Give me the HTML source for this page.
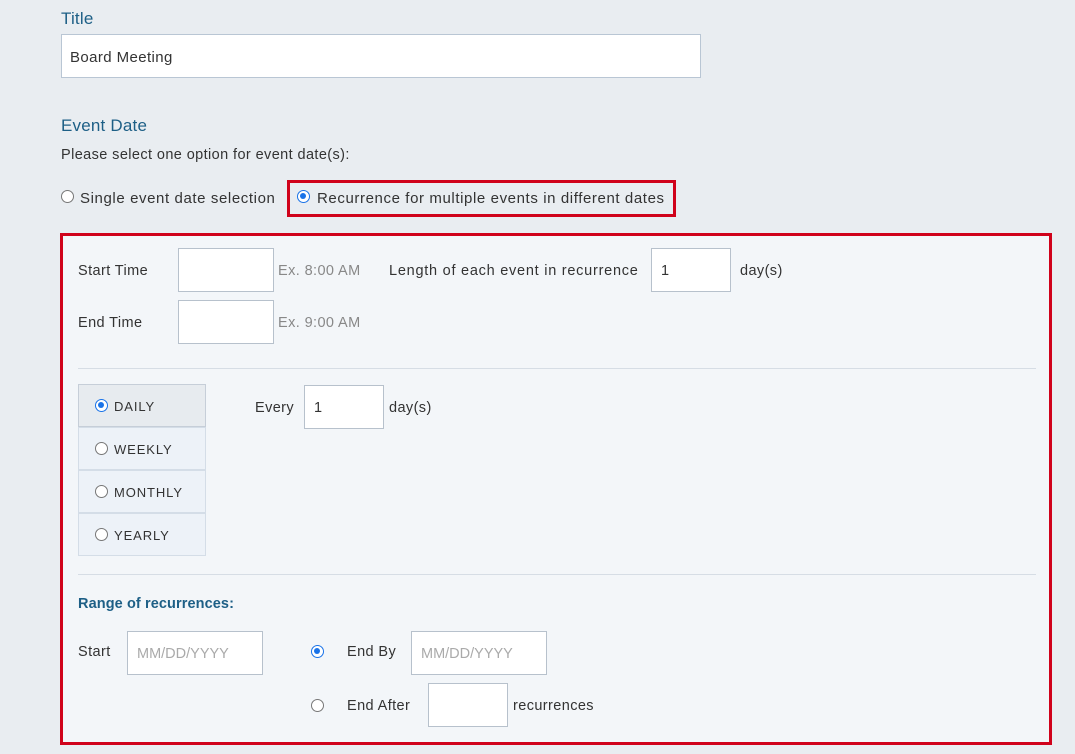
<!DOCTYPE html>
<html><head><style>
*{box-sizing:border-box;margin:0;padding:0}
body{width:1075px;height:754px;background:#e9edf1;font-family:"Liberation Sans",sans-serif;color:#333;position:relative;overflow:hidden;font-size:14.5px;letter-spacing:.4px}
.a{position:absolute;white-space:nowrap}
.in{position:absolute;background:#fff;border:1px solid #b7c1cc}
.r{position:absolute;width:13px;height:13px;border:1px solid #777;border-radius:50%;background:#fff}
.r.on{border:1.5px solid #1a73e8}
.r.on::after{content:"";position:absolute;left:2px;top:2px;width:6px;height:6px;border-radius:50%;background:#1a73e8}
.blue{color:#1d5f86}
.gray{color:#888}
.tab{position:absolute;left:78px;width:128px;height:43px;border:1px solid #d4dde7;background:#edf2f8}
.t{font-size:13px;letter-spacing:.9px}
</style></head><body>
<div class="a blue" style="left:61px;top:9px;font-size:17px;letter-spacing:.2px">Title</div>
<div class="in" style="left:61px;top:34px;width:640px;height:44px;border-color:#b9c6d4"></div>
<div class="a" style="left:70px;top:49px;font-size:15px">Board Meeting</div>
<div class="a blue" style="left:61px;top:116px;font-size:17px;letter-spacing:.2px">Event Date</div>
<div class="a" style="left:61px;top:147px">Please select one option for event date(s):</div>
<div class="r" style="left:61px;top:190px"></div>
<div class="a" style="left:80px;top:190px;font-size:15px;letter-spacing:.6px">Single event date selection</div>
<div class="a" style="left:287px;top:180px;width:389px;height:37px;border:3px solid #d0021b"></div>
<div class="r on" style="left:297px;top:190px"></div>
<div class="a" style="left:317px;top:190px;font-size:15px;letter-spacing:.6px">Recurrence for multiple events in different dates</div>

<div class="a" style="left:60px;top:233px;width:992px;height:512px;border:3px solid #d0021b;background:#f3f6f9"></div>
<div class="a" style="left:78px;top:263px">Start Time</div>
<div class="in" style="left:178px;top:248px;width:96px;height:44px"></div>
<div class="a gray" style="left:278px;top:263px">Ex. 8:00 AM</div>
<div class="a" style="left:389px;top:263px;letter-spacing:.75px">Length of each event in recurrence</div>
<div class="in" style="left:651px;top:248px;width:80px;height:44px"></div>
<div class="a" style="left:661px;top:263px">1</div>
<div class="a" style="left:740px;top:263px">day(s)</div>
<div class="a" style="left:78px;top:315px">End Time</div>
<div class="in" style="left:178px;top:300px;width:96px;height:44px"></div>
<div class="a gray" style="left:278px;top:315px">Ex. 9:00 AM</div>
<div class="a" style="left:78px;top:368px;width:958px;height:1px;background:#d6dde5"></div>

<div class="tab" style="top:384px;background:#e7ebef;border-color:#c6ced8"></div>
<div class="tab" style="top:427px"></div>
<div class="tab" style="top:470px"></div>
<div class="tab" style="top:513px"></div>
<div class="r on" style="left:95px;top:399px"></div><div class="a t" style="left:114px;top:399px">DAILY</div>
<div class="r" style="left:95px;top:442px"></div><div class="a t" style="left:114px;top:442px">WEEKLY</div>
<div class="r" style="left:95px;top:485px"></div><div class="a t" style="left:114px;top:485px">MONTHLY</div>
<div class="r" style="left:95px;top:528px"></div><div class="a t" style="left:114px;top:528px">YEARLY</div>
<div class="a" style="left:255px;top:400px">Every</div>
<div class="in" style="left:304px;top:385px;width:80px;height:44px"></div>
<div class="a" style="left:314px;top:400px">1</div>
<div class="a" style="left:389px;top:400px">day(s)</div>
<div class="a" style="left:78px;top:574px;width:958px;height:1px;background:#d6dde5"></div>

<div class="a blue" style="left:78px;top:596px;font-weight:bold;letter-spacing:.1px">Range of recurrences:</div>
<div class="a" style="left:78px;top:644px">Start</div>
<div class="in" style="left:127px;top:631px;width:136px;height:44px"></div>
<div class="a" style="left:137px;top:646px;color:#aaa;letter-spacing:0">MM/DD/YYYY</div>
<div class="r on" style="left:311px;top:645px"></div>
<div class="a" style="left:347px;top:644px">End By</div>
<div class="in" style="left:411px;top:631px;width:136px;height:44px"></div>
<div class="a" style="left:421px;top:646px;color:#aaa;letter-spacing:0">MM/DD/YYYY</div>
<div class="r" style="left:311px;top:699px"></div>
<div class="a" style="left:347px;top:698px">End After</div>
<div class="in" style="left:428px;top:683px;width:80px;height:44px"></div>
<div class="a" style="left:513px;top:698px">recurrences</div>
</body></html>
